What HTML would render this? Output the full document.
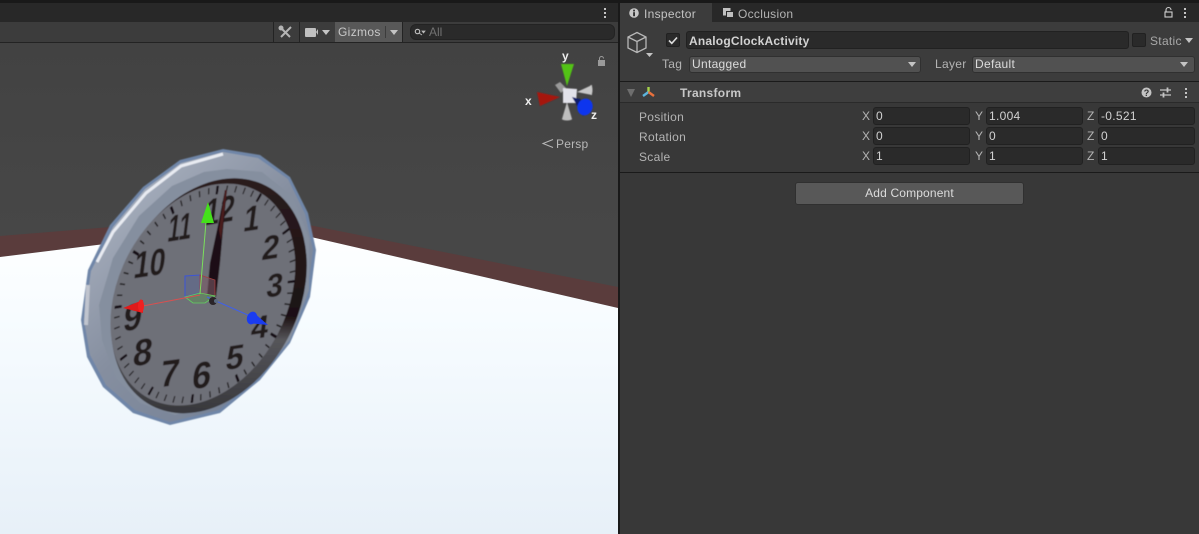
<!DOCTYPE html>
<html><head><meta charset="utf-8"><style>
html,body{margin:0;padding:0;background:#383838}
#r{position:relative;width:1199px;height:534px;overflow:hidden;background:#383838;font:12px/16px "Liberation Sans",sans-serif;color:#c4c4c4}
#r div{position:absolute;box-sizing:border-box;white-space:nowrap}
.f{background:#2a2a2a;border:1px solid #212121;border-radius:3px;height:18px;padding-left:2px;line-height:17px;color:#d2d2d2;letter-spacing:.3px}
.d{background:#515151;border:1px solid #303030;border-radius:3px;height:17px;padding-left:2px;line-height:15px;color:#dcdcdc;letter-spacing:.3px}
.l{color:#b4b4b4;letter-spacing:.3px}
.a{width:0;height:0;border-left:4.5px solid transparent;border-right:4.5px solid transparent;border-top:5px solid #c4c4c4}
svg{position:absolute;overflow:visible}
</style></head><body><div id="r">

<div style="left:0;top:0;width:618px;height:534px;background:linear-gradient(#414141,#474747 230px)"></div>
<svg width="618" height="534" style="left:0;top:0;overflow:hidden" viewBox="0 0 618 534">
<defs>
<linearGradient id="fl" x1="0" y1="225" x2="0" y2="534" gradientUnits="userSpaceOnUse"><stop offset="0" stop-color="#fff"/><stop offset=".3" stop-color="#f7fcff"/><stop offset="1" stop-color="#e7f0f8"/></linearGradient>
<linearGradient id="rim" x1="100" y1="190" x2="300" y2="400" gradientUnits="userSpaceOnUse"><stop offset="0" stop-color="#aab2c0"/><stop offset=".45" stop-color="#868fa0"/><stop offset="1" stop-color="#727f94"/></linearGradient>
<linearGradient id="dk" x1="40" y1="-100" x2="10" y2="110" gradientUnits="userSpaceOnUse"><stop offset="0" stop-color="#2a1c1e"/><stop offset=".58" stop-color="#1d1112"/><stop offset=".68" stop-color="#55555a"/><stop offset="1" stop-color="#38383c"/></linearGradient>
<filter id="b" x="-5%" y="-5%" width="110%" height="110%"><feGaussianBlur stdDeviation=".45"/></filter>
</defs>
<polygon points="0,236 259,215 618,287 618,308 259,225 0,257" fill="#5a3c3c"/>
<polygon points="0,257 259,225 618,308 618,534 0,534" fill="url(#fl)"/>

<g filter="url(#b)">
<polygon points="223,149 260,155 290,177 308,213 316,250 310,297 290,343 260,380 220,413 170,425 133,413 103,387 87,357 81,320 88,270 110,225 143,187 180,160" fill="#6f86a8"/>
<polygon points="223,152 258,158 288,179 305,214 313,250 307,296 288,341 258,378 219,410 170,422 135,410 106,385 90,355 84,320 91,271 113,227 145,189 181,163" fill="url(#rim)"/>
<polyline points="97,262 113,232 146,193 181,166 223,154" fill="none" stroke="#e8ebf2" stroke-width="3"/>
<polyline points="86,325 88,285" fill="none" stroke="#c0c4ce" stroke-width="4"/>
<polygon points="227,169 262,172 293,197 309,238 309,290 290,340 260,376 219,402 175,415 140,403 116,378 102,340 99,305 113,258 139,216 172,186 204,172" fill="#858f9f"/>

<g transform="matrix(.897,-.133,-.127,1.08,204.700,294.300)">
<circle cx="5" cy="2" r="108" fill="url(#dk)"/>
<circle cx="-2" cy="0" r="102" fill="#6e7078"/>
<circle cx="0" cy="0" r="97" fill="none" stroke="#1f1a1d" stroke-width="6" stroke-dasharray="1.4 8.76"/>
<circle cx="0" cy="0" r="96.500" fill="none" stroke="#141012" stroke-width="8" stroke-dasharray="2.500 48.030" stroke-dashoffset="1.250"/>
</g>

<g font-family="Liberation Sans" font-weight="700" font-size="36" fill="#241a1e" text-anchor="middle">
<text transform="translate(220,210) matrix(.74,-.13,-.13,1.05,0,0)" y="12.500">12</text>
<text transform="translate(180,227) matrix(.62,-.1,-.13,1.05,0,0)" y="12.500">11</text>
<text transform="translate(150,263) matrix(.78,-.12,-.13,1.05,0,0)" y="12.500">10</text>
<text transform="translate(133,317) matrix(.92,-.13,-.13,1.05,0,0)" y="12.500">9</text>
<text transform="translate(143,352) matrix(.95,-.13,-.13,1.05,0,0)" y="12.500">8</text>
<text transform="translate(170,373) matrix(.95,-.13,-.13,1.05,0,0)" y="12.500">7</text>
<text transform="translate(202,375) matrix(.95,-.13,-.13,1.05,0,0)" y="12.500">6</text>
<text transform="translate(235,357) matrix(.88,-.13,-.13,.95,0,0)" y="12.500">5</text>
<text transform="translate(260,327) matrix(.85,-.13,-.12,.9,0,0)" y="12.500">4</text>
<text transform="translate(275,285) matrix(.82,-.12,-.1,.92,0,0)" y="12.500">3</text>
<text transform="translate(271,247) matrix(.85,-.13,-.12,.95,0,0)" y="12.500">2</text>
<text transform="translate(252,218) matrix(.8,-.12,-.13,1,0,0)" y="12.500">1</text>
</g>

<polygon points="207,295 216,297 220,263 223,230 227,190 225,190 217,230 210,263" fill="#1f1012"/>
<polygon points="221,240 227,190 225,190 219,230" fill="#4a1a1e"/>
</g>

<polygon points="185,276 200,275 200,293 185,297" fill="#5d6790" fill-opacity=".6" stroke="#3b55d8"/>
<polygon points="200,275 215,280 215,296 200,293" fill="#7a5a66" fill-opacity=".6" stroke="#a54040" stroke-width=".8"/>
<polygon points="185,297 200,293 215,296 205,303 193,303" fill="#5f8a5a" fill-opacity=".6" stroke="#62d060" stroke-width=".8"/>
<line x1="200" y1="294" x2="206" y2="222" stroke="#7be05c" stroke-width="1"/>
<line x1="143" y1="306" x2="200" y2="295" stroke="#d85050" stroke-width="1"/>
<line x1="207" y1="297" x2="250" y2="316" stroke="#4060e8" stroke-width="1"/>
<polygon points="208,202 201,223 214,223" fill="#44e01a"/>
<polygon points="123,308 143,300 143,313" fill="#e01a1a"/>
<ellipse cx="141" cy="306" rx="3" ry="6.500" fill="#f02020"/>
<polygon points="268,325 253,312 248,323" fill="#1a3cf0"/>
<ellipse cx="252" cy="318" rx="5" ry="6.500" fill="#1a3cf0" transform="rotate(20 252 318)"/>
<circle cx="213" cy="301" r="4" fill="#2a2428"/>
<circle cx="216" cy="301" r="2" fill="#5a6a80"/>

<g filter="url(#b)">
<polygon points="555,85 560,82 566,88 561,93" fill="#999"/>
<polygon points="577,92 592,85 592,95" fill="#c8c8c8"/>
<ellipse cx="591" cy="90" rx="1.500" ry="5" fill="#c8c8c8"/>
<polygon points="567,102 562,119 572,119" fill="#bdbdbd"/>
<ellipse cx="567" cy="119" rx="5" ry="1.500" fill="#bdbdbd"/>
<polygon points="563,88 577,89 576,103 563,103" fill="#e2e2ea"/>
<polygon points="561,64 574,64 567,86" fill="#52c214"/>
<polygon points="560,97 537,92 540,106" fill="#a51410"/>
<polygon points="572,97 580,99 590,110 583,116" fill="#0c1a6a"/>
<ellipse cx="585" cy="107" rx="7.500" ry="8.500" fill="#1036ee" transform="rotate(25 585 107)"/>
</g>
<rect x="598" y="60" width="7" height="6" fill="#9a9a9a"/>
<path d="M599.500 60v-1.500a2 2 0 0 1 4 0" fill="none" stroke="#9a9a9a"/>
<path d="M553 139.500l-10 4 10 4" fill="none" stroke="#b8b8b8"/>
</svg>
<div style="left:562px;top:48px;font-weight:700;color:#eee">y</div>
<div style="left:525px;top:93px;font-weight:700;color:#eee">x</div>
<div style="left:591px;top:107px;font-weight:700;color:#eee">z</div>
<div style="left:556px;top:136px;color:#b8b8b8;letter-spacing:.2px">Persp</div>

<!-- top bars -->
<div style="left:0;top:0;width:1199px;height:3px;background:#191919"></div>
<div style="left:0;top:3px;width:618px;height:19px;background:#282828"></div>
<div style="left:0;top:22px;width:618px;height:20px;background:#3c3c3c"></div>
<div style="left:0;top:42px;width:618px;height:1px;background:#232323"></div>
<div style="left:618px;top:0;width:2px;height:534px;background:#191919"></div>
<div style="left:604px;top:8px;width:2px;height:2px;background:#c4c4c4;box-shadow:0 4px #c4c4c4,0 8px #c4c4c4"></div>

<div style="left:273px;top:22px;width:1px;height:20px;background:#232323"></div>
<svg style="left:278px;top:25px" width="15" height="15" viewBox="0 0 15 15"><path d="M2 2l10 10M13 2L3 12" stroke="#b4b4b4" stroke-width="2" fill="none"/><circle cx="3" cy="3" r="2.500" fill="#b4b4b4"/></svg>
<div style="left:299px;top:22px;width:1px;height:20px;background:#232323"></div>
<div style="left:305px;top:28px;width:11px;height:9px;background:#c0c0c0;border-radius:1px"></div>
<div style="left:316px;top:29px;width:0;height:0;border-top:3.500px solid transparent;border-bottom:3.500px solid transparent;border-right:2px solid #c0c0c0"></div>
<div class="a" style="left:322px;top:30px;border-top-color:#c4c4c4"></div>
<div style="left:335px;top:22px;width:67px;height:20px;background:#585858"></div>
<div style="left:338px;top:24px;color:#c8c8c8;letter-spacing:.35px">Gizmos</div>
<div style="left:385px;top:26px;width:1px;height:12px;background:#3c3c3c"></div>
<div class="a" style="left:390px;top:30px"></div>
<div style="left:402px;top:22px;width:1px;height:20px;background:#232323"></div>
<div style="left:410px;top:24px;width:205px;height:16px;background:#2a2a2a;border:1px solid #232323;border-radius:6px"></div>
<svg style="left:414px;top:28px" width="12" height="8" viewBox="0 0 12 8"><circle cx="3.500" cy="3.500" r="2.200" fill="none" stroke="#bbb" stroke-width="1.200"/><path d="M5 5l3 2M8 3h3l-1.500 2z" stroke="#bbb" fill="#bbb" stroke-width=".8"/></svg>
<div style="left:429px;top:24px;color:#727272">All</div>

<!-- inspector tabs -->
<div style="left:620px;top:3px;width:579px;height:19px;background:#282828"></div>
<div style="left:620px;top:3px;width:92px;height:19px;background:#3c3c3c"></div>
<svg style="left:629px;top:8px" width="10" height="10" viewBox="0 0 10 10"><circle cx="5" cy="5" r="4.800" fill="#c8c8c8"/><rect x="4.100" y="4.200" width="1.900" height="4" fill="#333"/><rect x="4.100" y="1.700" width="1.900" height="1.700" fill="#333"/></svg>
<div style="left:644px;top:6px;letter-spacing:.3px;color:#c4c4c4">Inspector</div>
<svg style="left:723px;top:8px" width="11" height="10" viewBox="0 0 11 10"><rect x="0" y="0" width="7.500" height="7.500" fill="#c0c0c0"/><rect x="3.500" y="3.500" width="7" height="6" fill="#c0c0c0" stroke="#282828"/></svg>
<div style="left:738px;top:6px;letter-spacing:.3px;color:#b4b4b4">Occlusion</div>
<svg style="left:1164px;top:7px" width="9" height="11" viewBox="0 0 9 11"><rect x="1" y="5" width="7" height="5" fill="none" stroke="#d0d0d0" stroke-width="1.100"/><path d="M2 5V3a2.500 2.500 0 0 1 5 0" fill="none" stroke="#d0d0d0" stroke-width="1.100"/></svg>
<div style="left:1184px;top:8px;width:2px;height:2px;background:#c4c4c4;box-shadow:0 4px #c4c4c4,0 8px #c4c4c4"></div>

<!-- header -->
<div style="left:620px;top:22px;width:579px;height:59px;background:#3c3c3c"></div>
<svg style="left:626px;top:31px" width="24" height="28" viewBox="0 0 24 28"><path d="M11 1.500l9 4.500v11l-9 4.500-9-4.500V6zM2 6l9 4.500L20 6M11 10.500v11" fill="none" stroke="#b8b8b8" stroke-width="1.300"/><polygon points="20,22 27,22 23.500,26" fill="#c4c4c4"/></svg>
<div style="left:666px;top:33px;width:14px;height:14px;background:#2a2a2a;border:1px solid #212121;border-radius:2px"></div>
<svg style="left:668px;top:36px" width="10" height="9" viewBox="0 0 10 9"><path d="M1 4.500l2.800 2.800L9 1.500" fill="none" stroke="#ddd" stroke-width="1.600"/></svg>
<div style="left:686px;top:31px;width:443px;height:18px;background:#2a2a2a;border:1px solid #212121;border-radius:3px"></div>
<div style="left:689px;top:33px;font-weight:700;color:#d2d2d2;letter-spacing:.2px">AnalogClockActivity</div>
<div style="left:1132px;top:33px;width:14px;height:14px;background:#2a2a2a;border:1px solid #212121;border-radius:2px"></div>
<div style="left:1150px;top:33px;color:#a8a8a8;letter-spacing:.3px">Static</div>
<div class="a" style="left:1185px;top:38px"></div>
<div class="l" style="left:662px;top:56px">Tag</div>
<div class="d" style="left:689px;top:56px;width:232px">Untagged</div>
<div class="a" style="left:908px;top:62px"></div>
<div class="l" style="left:935px;top:56px">Layer</div>
<div class="d" style="left:972px;top:56px;width:223px">Default</div>
<div class="a" style="left:1180px;top:62px"></div>

<div style="left:620px;top:81px;width:579px;height:1px;background:#1a1a1a"></div>
<div style="left:620px;top:82px;width:579px;height:20px;background:#3e3e3e"></div>
<div style="left:620px;top:102px;width:579px;height:1px;background:#2a2a2a"></div>
<div style="left:627px;top:89px;width:0;height:0;border-left:4.500px solid transparent;border-right:4.500px solid transparent;border-top:8px solid #6e6e6e"></div>
<svg style="left:641px;top:85px" width="15" height="14" viewBox="0 0 15 14"><path d="M7.500 7V2" stroke="#a7d34a" stroke-width="2.400"/><path d="M7.500 7L2 11" stroke="#5cb4dc" stroke-width="2.400"/><path d="M7.500 7L13 11" stroke="#e8703c" stroke-width="2.400"/></svg>
<div style="left:680px;top:85px;font-weight:700;color:#c8c8c8;letter-spacing:.3px">Transform</div>
<svg style="left:1141px;top:87px" width="11" height="11" viewBox="0 0 11 11"><circle cx="5.500" cy="5.500" r="5" fill="#c4c4c4"/><text x="5.500" y="9" font-size="9" font-weight="700" text-anchor="middle" fill="#333" font-family="Liberation Sans">?</text></svg>
<svg style="left:1160px;top:87px" width="11" height="11" viewBox="0 0 11 11"><path d="M0 3h11M0 8h11" stroke="#c4c4c4" stroke-width="1.200"/><path d="M7.500 .5v5M3.500 5.500v5" stroke="#c4c4c4" stroke-width="1.800"/></svg>
<div style="left:1185px;top:88px;width:2px;height:2px;background:#c4c4c4;box-shadow:0 4px #c4c4c4,0 8px #c4c4c4"></div>

<!-- rows -->
<div class="l" style="left:639px;top:109px">Position</div>
<div class="l" style="left:639px;top:129px">Rotation</div>
<div class="l" style="left:639px;top:149px">Scale</div>

<div class="l" style="left:862px;top:108px">X</div><div class="f" style="left:873px;top:107px;width:97px">0</div>
<div class="l" style="left:975px;top:108px">Y</div><div class="f" style="left:986px;top:107px;width:97px">1.004</div>
<div class="l" style="left:1087px;top:108px">Z</div><div class="f" style="left:1098px;top:107px;width:97px">-0.521</div>

<div class="l" style="left:862px;top:128px">X</div><div class="f" style="left:873px;top:127px;width:97px">0</div>
<div class="l" style="left:975px;top:128px">Y</div><div class="f" style="left:986px;top:127px;width:97px">0</div>
<div class="l" style="left:1087px;top:128px">Z</div><div class="f" style="left:1098px;top:127px;width:97px">0</div>

<div class="l" style="left:862px;top:148px">X</div><div class="f" style="left:873px;top:147px;width:97px">1</div>
<div class="l" style="left:975px;top:148px">Y</div><div class="f" style="left:986px;top:147px;width:97px">1</div>
<div class="l" style="left:1087px;top:148px">Z</div><div class="f" style="left:1098px;top:147px;width:97px">1</div>

<div style="left:620px;top:172px;width:579px;height:1px;background:#1a1a1a"></div>
<div style="left:795px;top:182px;width:229px;height:23px;background:#585858;border:1px solid #303030;border-radius:3px;text-align:center;line-height:20px;letter-spacing:.15px;color:#dcdcdc">Add Component</div>
</div></body></html>
